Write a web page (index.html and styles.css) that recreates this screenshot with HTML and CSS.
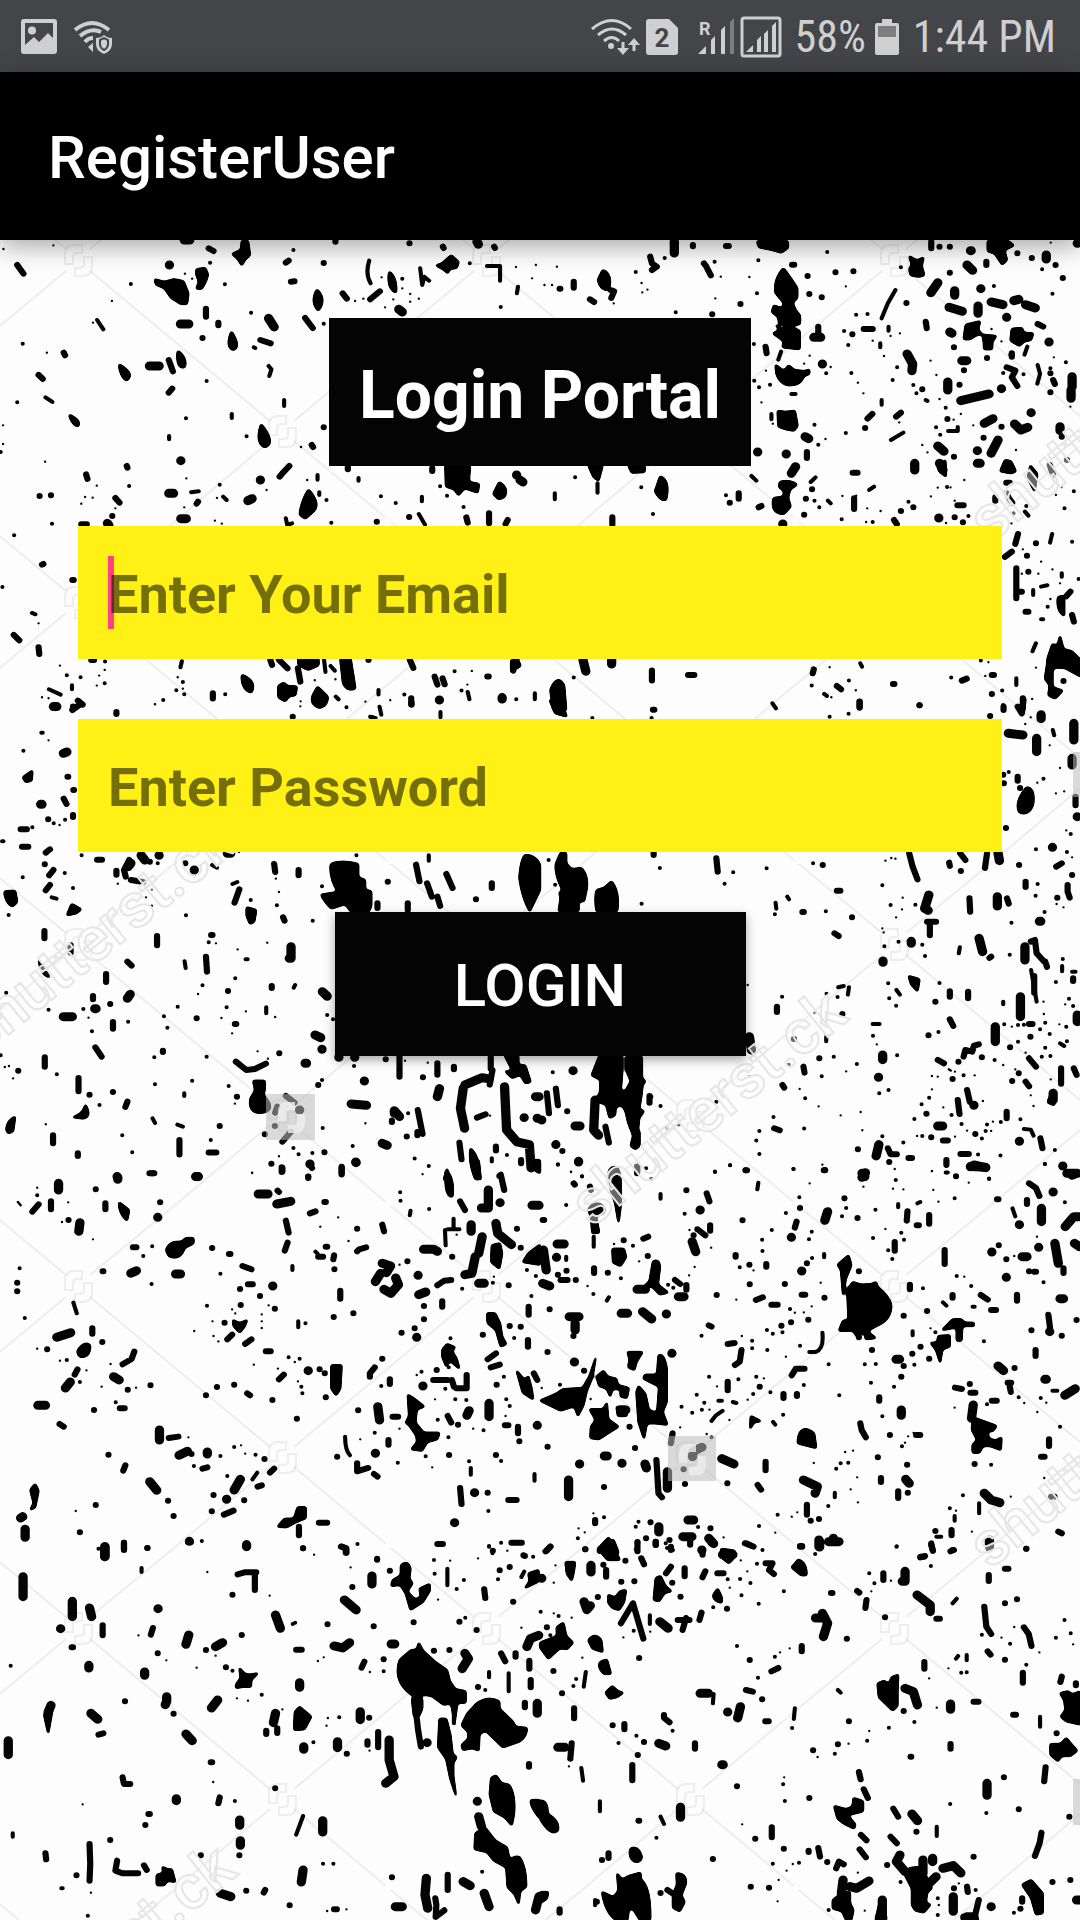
FILE: index.html
```html
<!DOCTYPE html>
<html lang="en">
<head>
<meta charset="utf-8">
<meta name="viewport" content="width=device-width, initial-scale=1">
<title>RegisterUser</title>
<link rel="stylesheet" href="styles.css">
</head>
<body>
<div class="status">
  <div class="status-group notices">
    <svg width="36" height="36" viewBox="0 0 36 36" aria-hidden="true"><path fill-rule="evenodd" d="M3 0h30q3 0 3 3v29q0 3-3 3H3q-3 0-3-3V3q0-3 3-3zM4 4v22l9-8 5 5 9-9 5 5V4z"/><circle cx="11" cy="11.500" r="4"/></svg>
    <svg width="40" height="36" viewBox="0 0 40 36" aria-hidden="true"><path class="line4" d="M2 11Q19-3 36 11M7 17Q18 8 28 13M12 23Q15 19 20 19"/><path d="M15 28l5-4v9zM23 19q5 0 8-3 3 3 8 3v6q0 7-8 10-8-3-8-10z"/><path class="shield" d="M27 21l4-2 4 2v4q0 4-4 6-4-2-4-6z"/></svg>
  </div>
  <div class="status-group">
    <svg width="49" height="40" viewBox="0 0 49 40" aria-hidden="true"><path class="line3" d="M1 12Q21-5 40 12M7 18Q21 6 35 18M13 24Q21 17 28 24"/><circle cx="20" cy="29" r="3"/><path class="line3" d="M32 25v10M43 34V25"/><path d="M26 31h12l-6 7zM37 28h12l-6-7z"/></svg>
    <svg class="sim" width="32" height="36" viewBox="0 0 32 36" aria-hidden="true"><path d="M3 0h20l9 9v24q0 3-3 3H3q-3 0-3-3V3q0-3 3-3z"/><text x="16" y="28">2</text></svg>
    <svg class="bars" width="36" height="40" viewBox="0 0 36 40" aria-hidden="true"><text x="1" y="18">R</text><path d="M0 37l8-8v8zM13 37V23l4-4v18zM23 37V13l4-4v28z"/><path class="dim" d="M32 37V5l4-4v36z"/></svg>
    <svg width="42" height="42" viewBox="0 0 42 42" aria-hidden="true"><rect class="line3" x="2" y="2" width="38" height="38" rx="2"/><path d="M6 36l7-7v7zM17 36V24l4-4v16zM24 36V18l4-4v22zM32 36V10l4-4v30z"/></svg>
    <span class="battery-text">58%</span>
    <svg width="24" height="36" viewBox="0 0 24 36" aria-hidden="true"><path d="M7 0h10v4h5q2 0 2 2v28q0 2-2 2H2q-2 0-2-2V6q0-2 2-2h5z"/><path class="empty" d="M3 7h18v11H3z"/></svg>
    <span class="clock">1:44 PM</span>
  </div>
</div>
<header class="appbar"><h1>RegisterUser</h1></header>
<main class="screen">
<svg class="splatter" viewBox="0 240 1080 1680" preserveAspectRatio="xMidYMin slice" aria-hidden="true">
<defs>
<filter id="ink" x="-10%" y="-10%" width="120%" height="120%">
<feGaussianBlur stdDeviation="5"/>
<feComponentTransfer><feFuncA type="linear" slope="5" intercept="-1.700"/></feComponentTransfer>
</filter>
<pattern id="grid" x="-22" y="180" width="408" height="342" patternUnits="userSpaceOnUse">
<path d="M112 91L292 241M316 261L408 338M88 91L0 164M0 -4L88 69M112 69L196 0M196 342L292 261M316 241L408 164"/>
<g id="mark"><path d="M87 84V75q0-10 9-10h8v8h-5q-4 0-4 4v7zM114 77v9q0 10-9 10h-8v-8h5q4 0 4-4v-7z"/></g>
<use href="#mark" x="204" y="171"/>
</pattern>
</defs>
<!-- upper left -->
<g transform="translate(0 230) scale(.3444 .3333)">
<path class="a" d="M10 57h0M155 46h0M325 213h0M270 278h0M136 368h0M9 586h0M9 642h0M131 695h0M281 767h0M247 801h0M269 803h0M236 821h0M335 835h0M541 745h0M535 832h0M630 804h0M624 872h0M644 881h0M774 780h0M892 750h0M874 651h0M537 131h0M558 146h0M1031 213h0M1055 206h0M1142 208h0M1191 192h0M1191 215h0M1216 206h0M1118 232h0M1108 142h0M1168 175h0M1545 145h0M1498 111h0M1556 105h0M112 1180h0M174 1307h0M304 1320h0M288 1337h0M281 1367h0M516 1342h0M531 1376h0M450 1423h0M914 1351h0M974 1348h0M1061 1415h0M1133 1411h0M1357 1364h0M1370 1323h0M141 1405h0M122 1402h0"/>
<path class="b" d="M380 162h0M610 98h0M852 60h0M653 163h0M729 248h0M66 341h0M50 517h0M2 666h0M600 453h0M540 565h0M716 619h0M673 552v12M491 618v10M638 764h0M375 768h0M151 881h0M41 916h0M7 1071h0M282 270l18 28M132 502l20 14M648 800l10 10M948 810h0M962 878h0M922 735v14M927 787v8M1041 744v8M1106 799h0M1149 819h0M1278 769h0M1346 831h0M1298 797h0M1225 800v14M1216 852l18 32M1364 100h0M1168 146h0M1454 231h0M1504 170l-3 20M1072 92q-12 40 4 68M1414 108h38v44M555 787l22-3M194 1336h0M234 1342h0M209 1366v12M304 1360h0M531 1356h0M512 1381h0M535 1393h0M474 1410h0M654 1393h0M305 1295h0M93 1149l10 4M528 1294l-4 18M941 1290l4 36M960 1308l12 14M975 1400l8 8M1099 1380v14M1174 1394h0M1320 1324h0M1340 1382h0M1358 1386l5 22M1499 1408h0M1553 1390v18M940 281h0M737 352l4 2M825 510v18M1220 115l6 50 6-25 14 12M830 865l4 20 14-5M142 1378l34 16M780 408l8 10-6 20"/>
<path class="c" d="M940 99h0M1189 40h0M1286 50l2 4M1435 50l2 4M50 105l18 26M185 368l4 8M112 435l12 12M588 324h0M634 278v8M598 236v24M606 55l14 8M830 98l8-6M845 155l10-1M886 264l22 30M995 190l12 16M1075 208l28-24M115 798h0M148 796h0M368 708l2 5M250 733l4 14M335 804l12 14M575 815l-4 6M326 858h0M236 883h16M840 708l-20 22-8 10M905 645l4 6M940 592h0M1094 875h0M1188 861h0M1354 862l4 16M1420 850v30M1474 870l-6 12M1255 715v8M1010 712v6M490 390l12 34M756 330l30 10M122 1004l4-2M210 1050h4M40 1215l16 16M112 1252l2 20M618 1390v16M226 1412l14 12M212 1430h0M865 1315l7 40M785 1290l5 15M810 1290l25 25M1070 1290h0M1262 1340l8 24M1285 1345l6 18M1415 1340h4M1500 1288l-10 34M1194 1405v18M1190 1290l10 24M974 30v5M490 488l10-12M265 1290h8"/>
<path class="d" d="M434 408h28M525 692h0M535 30h16M492 105h0M756 750h0M720 812l12-6M780 265l16 26M524 282h24M490 790h14M525 866h16M1276 1410h0M1458 1403v4M155 1430h10M1385 35l4 8M312 880l4 6M1510 750l8 6M1500 735h0M1158 238l10 8"/>
<path class="f" d="M449 148l28 8 28-8 28 6 14 36-4 32h-18l-28-18-20-30-24-10zM570 118l26-4 8 20-6 20-12 22h-16l8-20-8-22zM702 32h18l6 44-14 12-10 18-12-20-16-14 26-12zM1266 106l18-6 26-24 22 20-6 18-20 2-6 14-10-10zM345 402q50 30 22 50-18-10-22-50M200 553q40 20 26 37-18-6-26-37M672 304q30 50 4 56-22-10-4-56M516 362q30 24 20 50-26 6-20-50M920 178q30 30 4 64-24-24-4-64M1130 124q24 20 20 64-28-10-20-64M758 582q46 60 10 70-28-14-10-70M896 778q40 48 10 70l-20 18-16-12q4-40 26-76M1293 706h72l-4 50 30 6-4 26-22-8-16-6-18 22-12-18-24-8zM1450 756q30 20 14 46l-16 6-16-16zM702 1334q46 20 28 54-30-8-28-54M808 1368l16-10 10 10 28 2-4 26-18 2-12 16-20-12zM922 1370l30 30q0 30-24 34-30-10-20-38zM988 1286h30l14 90q-24 10-36-16zM865 1286h60v20l-30 14-28-14zM1484 1290h20l8 18-28 16z"/>
</g>
<!-- upper right -->
<g transform="translate(540 230) scale(.3444 .3333)">
<path class="a" d="M13 165h0M35 165h0M295 159h0M297 187h0M312 179h0M214 220h0M509 205h0M49 110h0M525 140h0M608 141h0M888 169h0M966 332h0M1018 318h0M1045 310h0M999 378h0M1134 392h0M1151 435h0M923 458h0M939 490h0M844 411h0M643 517h0M783 377h0M656 422h0M829 627h0M1110 645h0M1125 667h0M1160 507h0M1222 552h0M1201 569h0M1258 586h0M1043 577h0M1311 297h0M1340 334h0M1483 38h0M1363 374h0M1492 382h0M1540 530h0M1382 660h0M1514 771h0M1498 795h0M1232 750h0M1192 772h0M1155 773h0M1135 799h0M1204 812h0M878 798h0M918 797h0M950 835h0M989 843h0M947 876h0M1179 879h0M1369 880h0M1402 958h0M1455 995h0M1488 1018h0M1447 1031h0M1399 1031h0M1482 1107h0M1510 1060h0M917 1381h0M846 1402h0M1429 1407h0M1293 1338h0M1440 1313h0M1302 1297h0M841 1312h0M676 581h0M767 401h0"/>
<path class="b" d="M278 126h0M362 84h0M394 247h0M507 95h0M634 91h0M834 66h0M1048 112h0M1488 191h0M918 254h0M951 252h0M883 303h0M895 345h0M1037 412h0M1024 450h0M1093 490h0M1084 465h0M831 430h0M622 452h0M636 472h0M668 464h0M621 342h0M630 190h0M904 429h0M992 510v14M888 609h0M797 584h0M808 644h0M730 492h12M672 552v16M1012 290v12M988 340v12M1032 180l-22 40-18 45M1415 350l-8 24M1445 405l7 26-8 30M1527 397h0M1345 429h0M1404 433h0M1178 533h0M1055 608l-36 22M1150 592h0M1162 614h0M1185 603h28v-12M1318 168h0M1458 118h0M1120 510l5 3M102 742h0M294 772h0M328 852h0M167 760v28M43 790v18M540 796h0M614 738l14 14M800 742l-14 14M970 770l-14 10M836 812l8 8M797 812h0M811 832h0M876 868h0M966 876h0M1182 771h0M1070 815h0M1244 858h0M1375 850h0M1408 845l10 12M1523 835h0M1550 784h0M1487 912l-6 26M1545 935h0M1455 1070l18-4M1474 1130h0M1455 1168h6M1432 1080v15M1440 1240l-10 24M930 1300l5 10M897 1352h0M789 1367h0M825 1392l8 6M675 1420l10 15M1194 1343h0M1342 1382h0M1383 1345v20M1280 1292h0M98 1343h0M325 1438h0M1345 1425v14M1515 1030v10M1564 1047h0M1482 415h0M1412 828h0M700 365l-8 24"/>
<path class="c" d="M444 45v4M540 48h8M57 176h2M98 155v18M320 80l5 20 14 10-14 10M476 100l6 8 14 28M205 180l10 4-8 20M582 222h0M500 253h0M777 138h0M782 192h0M818 202h0M858 127h0M910 124h0M1064 219h0M1136 35v20M1160 50h0M1190 50h0M1386 70h0M1428 84h0M1497 105h0M1518 144h0M1296 95v10M1190 128h0M940 297h26M907 313h0M1120 275l3 20M808 290v25M1202 352h0M1231 421h0M1298 384h0M1110 478h0M1218 464h0M1482 430h0M1482 487h0M1515 620h0M1183 567h0M1340 590h0M1288 623h0M1202 680h0M775 666v18M908 728h14M965 552l-14 14M944 594h0M1048 548l-14 12M790 778h0M772 806h0M551 818h0M577 790v16M767 854h0M635 832l8-4M912 805v32M1084 832h0M1048 843h0M1212 826h18M1204 862h0M1228 877h0M1354 758h10M1355 790l6 14 10 14M1322 802v10M1028 870l8 12M1440 940h0M1388 912l-8 30M1414 977h0M1370 965l-20 16M1418 1025h0M1383 1015v90M1385 1085h14M1540 1085l-12 14M1410 1145h8M1545 1155l5 20M795 1318l-3 12M325 1322v30M430 1335h18M1025 1362h4M1225 1352l14-6M1312 1335h6M1312 1392h0M928 1415v16M1102 1426h0M1520 1353h0M1402 1405v30M862 1368l12 10M1370 370v10M1355 412l25 10-10 20 16 26M1445 282l16 8M1490 450l5 12M1530 690h0M1480 705l10 30M210 862v22M655 350l3 20M145 208l12 8M732 104h6"/>
<path class="d" d="M390 35v34M700 55h0M1155 158l-20 30M1204 182v14M1250 62h2M1240 105l16 16M1280 176h0M1470 75v12M1272 228v22M1188 232l38 12M1310 216l34 8M1376 212l14-4M1410 224l28 10M1355 262h0M1190 306l6 4M1478 336h0M1066 372l16 30-2 20M1184 456v24M1340 476h0M1426 548h0M1225 392h14M795 322h20M820 402h0M632 666h0M715 672h0M770 620l10 6M1155 648l18 16M1270 662h0M1510 590v12M1378 582l18 18 20-8M1290 580l25-14M1088 700v20M1160 700l10 20M1330 630l-20 40M1222 512l82-20M742 710l-12 20M1270 700h8M1158 864h0M1545 440v30M1542 480v25M705 882h0M1565 1295v8M1560 40h0M208 1288v14M125 1290l8 34"/>
<path class="f" d="M630 34h90v20l-20 14-24-8-40-8zM707 114q22 30 40 60v30l-14 14 10 24 12 14v26l-10 2-50-2-4-22-18-14 6-20 24 10 6-16-26-32q-4-42 24-74M684 286l24 14 6-14 40 16v56l-50-6 4-18-32-24 22-10zM684 404l24 20 14-18 16 14 30 4 14-6v14l-16 6q-8 30-46 28-26-6-34-36zM690 542l22 4 28-4 8 46-10 14-24-4-22-8zM182 120q30 10 18 60-24 4-32-30zM696 756q30-8 50 8l-20 14-6 26 8 26-20 22q-40 0-30-48l30-4v-18l-14-10zM1300 32h58l18 14-28 14 8 30-14 14-22-34-20-6zM1072 78l22 14 20-10-6 26 8 28-16 4-24-4-4-20 8-10zM1236 284l42-10-6 24 10 14-16 4-18 12h-18zM1285 314l40 4-12 18v22h-24v-18zM1370 296l30-2 4 14 28 2-6 20-20 4-14 14-26-16zM346 738q34 10 20 72-18 4-34-30M140 706h42l-12 46-14-10zM256 706h48v20l-38 2zM1350 690l18 4 14 30-14 6-32-6zM1424 706l20 26-8 52-20-40zM1474 1284l14-42 14 8 8-32 10 40 24 6 26 26v50l-46-26-30-2-6 10v50l30 10-22 24-20-10 4-30-14-20 6-40zM1504 1100l18-2v60q-24-16-18-58M30 1380q20-52 40-14l6 74H38zM1155 710l22-20 2 50-20-16z"/>
</g>
<!-- middle left -->
<g transform="translate(0 700) scale(.3444 .3333)">
<path class="a" d="M450 13h0M141 121h0M173 375h0M441 569h0M424 592h0M441 617h0M342 551h0M801 536h0M810 576h0M690 748h0M776 728h0M627 730h0M575 882h0M674 1000h0M714 934h0M799 951h0M643 954h0M257 953h0M748 1054h0M778 1076h0M26 1098h0M14 1101h0M38 1135h0M682 1211h0M133 1273h0M1061 1270h0M1423 1247h0M1176 1082h0M1242 1088h0M810 1369h0M872 19h0M1227 1423h0M732 1418h0M694 456h0M873 4h0"/>
<path class="b" d="M120 98h4M68 152h0M156 370h0M189 359h0M94 382h0M6 424h4M66 532h0M188 519h0M25 645h0M237 466h0M212 564h0M540 646h0M908 662h0M804 616h0M728 600h0M606 727h0M588 856h0M683 835h0M713 778h6M536 784l3 20M18 878h0M141 929h0M242 927h0M267 994h0M372 965h0M476 949h0M516 920h0M486 983h0M658 922h0M857 855l-4 8M773 922v18M600 1070h0M448 1072h0M2 1066h0M165 1123h0M450 1153h0M535 1180v8M558 1142h0M664 1158h0M289 1215h0M384 1357h0M355 1306h0M443 1255l7 14M515 1274l16 6M612 1320h0M937 1284h0M1024 1338h0M907 1359h0M867 1363h0M788 1390h0M852 1344h0M1028 1098h0M935 1140h0M950 945h0M967 958h0M1185 1240h0M1204 1376h0M1245 1398h0M616 495l14 8M458 490h0M1245 466v16M935 559h0M1472 1365h0M1428 1375v10M1102 20l5 24M1279 36v16M1006 22h0M1035 466h0M150 592l14 4M675 552l14-6"/>
<path class="c" d="M338 36v6M210 30l24-18M198 230h-2M213 270h2M185 296l8 16M140 358h0M212 345v6M60 388h18M64 440h18M145 448l-12 10M130 493h0M282 479h14M338 512v12M155 510l-12 16M145 555l-12 16M435 485h0M538 490h0M365 530l-5-20 15-30M380 540l36 6M695 568l-14 40M796 492l3 24M867 510v16M1126 545h0M1382 598h0M1096 610v14M1184 610v20M1208 494l10 50M1240 550l14 40M1270 590l8 28M1296 522l18 42M1428 550v14M822 652l4 10M129 693v22M456 708v28M617 705h-4M205 736v22M370 785l12 12M308 822v24M598 770l3 45M270 888v10M320 912h0M571 955h0M686 972h-4M662 873h0M789 858v6M328 966v20M130 1072v28M277 1042l18 28M473 1052v4M53 1112h0M228 1134v40M260 1184h0M328 1176h0M370 1205l-6 16M154 1306v24M226 1360v8M521 1320v44M638 1278h0M606 1358h22M811 1060h0M688 1190h0M685 1085l30 25 25-3 32-16M924 1155h0M942 1357h0M769 1303h0M798 1278h0M805 1220l-6 18M830 1188l25 20M845 1295l-25 30M1120 1078h0M1228 1132h0M1270 1090v34M1318 1100v8M1425 1072v34M1181 1310h0M1212 1296v10M1138 1262v4M1213 1230l14 72M1334 1328l6 50M1440 1340v12M1513 1380v10M1450 1428h0M992 1404v20M820 1404v10M1385 1253l25-10M1160 1070v60M898 1390l8 14M850 50h0M1195 8v6M440 1420h4M895 1430h0M1430 1110l-8 44"/>
<path class="d" d="M122 313h-4M160 20h0M184 160l10-4M564 510h0M275 926h4M370 895l8-12M184 950h26M890 1090h-4M935 1048h0M915 1005l16 8M936 875l14 14M1058 1143h0M1020 1212l44 4M870 1230h0M1110 1330l14 6M1033 1386h0M1270 1190l6-24M1145 1240v-8l15 18M845 740v35h-5M380 490l-8 10M462 466h0M410 466l10 14M1522 1253h0M1555 1190h10M1560 1255h0M660 460h10M984 1072h0M1030 1072h0M1345 1165l-8 60 12 60M1350 1155l50-22 20 4M1465 1160l6 130 30 36 36 8 5 70M568 1430h8M340 1430h0"/>
<path class="f" d="M960 492q30-14 80 0v40l20 8 0 30 18 4v44l-8 18h-50l-18-24-40 14q-20-20-30-42l50-8q-26-40-22-84M1525 464q30 0 43 30v76l-30 64q-22-40-30-100 4-56 17-70M735 1142h34v24l-4 20q40 44-2 52-44 6-36-42l14-24zM716 622l28 8-6 36-12 6-10-24zM194 646l14-34 28 16-14 12zM66 232l28-20-2 30-18 4zM12 574l32-2 6 34-14 14q-20-10-24-46M212 1252q30-10 36-38 20 36-6 42zM18 1290q2-30 26-40l-6 44-14 6zM112 778l32 54q-26-6-32-54M1072 46l26 8h-26zM910 0h40l-18 22zM1465 1066h40v30l20 0 16 50-16 4-14-26-24 10-20-20 22 0zM1366 1344q30 30 28 94h-14q-20-50-14-94M1288 1440l10-34 10 34z"/>
</g>
<!-- middle right -->
<g transform="translate(540 700) scale(.3444 .3333)">
<path class="a" d="M676 12h0M685 26h0M1480 136h0M1425 52h0M1409 72h0M1510 204h0M1498 280h0M1522 274h0M1444 248h0M1528 391h0M1545 472h0M1003 482h0M1020 474h0M1032 476h0M1053 593h0M1051 628h0M1034 652h0M994 685h0M998 697h0M603 855h0M797 939h0M978 1033h0M873 1246h0M931 1236h0M936 1291h0M754 1167h0M809 1219h0M608 1129h0M889 1114h0M1205 1115h0M1262 1126h0M1138 1168h0M1171 1222h0M1286 1203h0M1425 1186h0M1433 1218h0M1310 1293h0M1508 973h0M1462 905h0M1525 913h0M1463 942h0M1370 980h0M1155 1130h0M1138 1128h0M1095 1308h0M1138 1413h0M1205 1310h0M1240 1292h0M1315 1265h0M1410 1058h0M1345 1095h0M1380 1108h0M1483 1138h0M90 1415h0M820 1394h0M1500 612h0M1520 622h0M1187 1108l6 4"/>
<path class="b" d="M152 54h0M324 54h0M348 504h0M561 517h0M536 551h0M658 505h0M295 611h0M25 480h0M44 554h0M793 490h0M994 556h0M682 643h0M830 634h0M684 608l2 18M718 590l5 8M1018 615h0M1090 614h0M1369 668h0M1000 739h0M1041 725h0M1110 734h0M1118 768h0M1011 850h0M1014 895h0M1034 917h0M1035 870l10 14M832 881h0M864 891h0M703 890h0M897 862l-3 22M866 862l16-4M966 972h20M967 1007h0M1160 849h0M1157 996h0M1219 742l-3 18M1364 764h0M1518 777h0M1516 798v16M1498 846h0M1545 815h10M1536 896h0M1548 918h0M1345 905v8M1445 552h0M1439 587h0M1465 636h0M1440 448h0M1530 456h0M1541 402h0M1361 216h0M1462 236h0M1489 90l4 16M896 41h0M841 50h0M722 1094h0M853 1070h0M1037 1066h0M920 1092h0M831 1010v14M770 1195h0M767 1286h0M678 1251h0M818 1129h0M350 1218h0M368 1284h0M403 1274h0M37 1117h0M512 1205h0M508 1415h0M552 1396h0M637 1362h0M628 1322h0M637 1293h0M1012 1170h0M985 1180h0M1130 1193h0M1108 1213h0M994 1309h0M1055 1328h0M1110 1308h0M1087 1257h0M1195 1245h0M1224 1272h0M1338 1266h0M1298 1274h0M1294 1293h0M1283 1316h0M1395 1258h0M1272 1364h0M1337 1367h0M1495 1350h0M1466 1392h0M1405 1287l20 2 8 18M1230 1126h0M1320 1080h0M1388 1025h0M1405 974h0M1388 975h0M1348 973h0M1452 988h0M1467 968h0M1480 1002h0M1467 1043h0M1482 1068h0M1457 1070h0M1528 980h0M1530 1024h0M1510 1030l12 8M736 1407h0M1180 1378v20M1304 1436h0M1208 1429h0M1178 1418h6M1426 810l16 95M308 1405h0M122 1430h0M52 1393h0"/>
<path class="c" d="M328 29h4M928 5v18M1102 16h0M821 495h0M862 572h10M762 636h4M906 652h0M855 700l12 8M878 942h0M737 1017h0M811 1075h0M765 1100l3 18M704 1155l5 8M688 920v16M680 1285l16 6M597 1411h0M828 1411h-4M512 475l4 40M330 460v5M1072 460l10 40 14 38M1188 488l2 10M1220 460l15 20M1222 513h0M1298 460l-6 44M1391 495h0M1410 545v16M1515 490l-16 10M1532 555v20l6 18M1545 525h0M1502 593h0M1247 595l2 40M1356 595l5 16M1124 665h26M1132 670v36M1310 770l-5 4M1190 874v16M1243 875v20M1148 905h0M1190 958l10 20M1128 1006h0M1387 20l12 20 5-40M1307 48h0M1346 20v10M1387 230v12M1394 264h0M1353 384h0M1345 224h0M1347 250h0M1555 290v26M1467 785l5 16M1425 725l12-5 5 40 22 25M1548 835v8M1155 1080l18 10M1215 1085h0M1198 1137h0M1283 1072h0M1230 1070l5-20 20 5 5-18 14-4M1365 1042h0M1390 1120h0M1371 1143h0M1420 1075l20 25M1420 972h10M1424 1010h0M1410 1145l10 14M1513 1105v46M1550 1105l8 20M1355 1235v20M1213 1200l5 42M1240 1170l8 36M1122 1241h0M1136 1312h0M1170 1322h14M1264 1302h0M1245 1362h-24M1070 1374h10M1014 1386h0M1010 1345l8 18h18M1453 1315l6 30M923 1348h0M318 1188v20M320 1190h0M79 1234h0M46 1166l6 50M65 1353h0M282 1400v16M20 1180l6 60M190 1280l10 48M1435 828v50"/>
<path class="d" d="M1455 44v12M1442 115v40M1550 70v50M1360 100l42 5M1545 175v20M1560 350h0M1488 442h0M1330 460l4 22M1129 585l-12 40 10 6M1328 590v28M1450 664h4M996 787v-4M1078 724v6M1275 715l10 40M995 1065v14M983 1132h0M976 1368l8-34M96 1112h0M102 1278h14M112 1386h0M46 1334h0M1155 1278h14M1392 1324h0M1518 1398h0M1545 1426l8-4M1250 1400l44 2M1395 890v60M1322 980v45M1260 1216h0M1490 1180v20M1408 740v40M5 1260h0M608 1010l6 40M160 1200l-4 90 14 16M935 1420l8 10M1560 945v20"/>
<path class="f" d="M28 0h44v36l6 14-34-10zM60 458h16v32l16 18 28-4q20 20 16 60l-8 40-16 0 0 30H54l6-40-4-16 10-6q-24-50-20-80zM164 570l22-6 22-20q24 30 16 90h-60q-6-40 0-64M172 1068h66l0 60-4 46 14 0 16-30-14-34v-40h46v66l10 8-8 10-4 36-6 38 14 6-14 20-4 40-10 22-18-48-8-36-10-16-18 4-2 26-16 8-10-40-36-12 18-22 2-40-26-14zM275 1290l14 4v44l-12 10-14-10zM1412 262q26 0 20 50-10 36-40 26-16-30 20-76M1070 828l32 10-6 36-18-20zM1476 1200l16-34 2 50-20-8zM208 1400l24 40h-32z"/>
</g>
<!-- lower left -->
<g transform="translate(0 1160) scale(.3444 .3333)">
<path class="a" d="M52 126l8 10M108 83h0M198 127h0M180 186h0M270 238h0M732 39h0M982 172h0M1012 243h0M930 200h0M1160 314h0M760 463h0M760 484h0M760 504h0M564 513h0M617 484h0M620 528h0M634 544h0M674 448h0M683 460h0M780 436h0M737 614h0M807 626h0M856 606h0M865 664h0M108 566h0M174 602h0M251 631h0M321 612h0M395 683h0M295 680h0M547 832h0M700 856h0M712 881h0M220 1053h0M912 1184h0M1046 838h0M1160 806h0M1255 922h0M1263 718h0M1374 806h0M1434 350h0M1326 224h0M1210 645h0M1468 768h0"/>
<path class="b" d="M108 106h0M57 325h0M72 474h0M442 259h0M640 341h0M440 372h0M416 288h0M601 437h0M213 428l10 32M194 600h0M232 666h0M336 727h0M680 861h0M742 884h0M640 888h0M563 918h0M660 948h0M586 1143h0M286 1166h0M838 592h0M870 596h0M875 680h0M878 700h0M887 490h0M866 484v18M849 318v12M1162 97h0M1163 122h0M1192 152l-2 14M1246 147h0M1038 1152h0M1107 678h0M1155 908h0M1088 818h0M1236 889h0M1302 832h0M1303 622v0M1293 686h0M1322 718h0M1354 720h0M1271 779h0M1404 811h0M1362 904h0M1367 924v20M1455 903h0M1418 1053h0M1342 386h0M1431 368h0M1308 535h0M1224 635h0M1470 718h0M1480 738h0M1463 650h0M1493 534h0M1530 330h0M1556 348h0M1420 1160h0M1455 1148h0M1430 1170v10M1292 210l2 46M1300 208h34M1317 176v30M1552 942v20M1543 408h0M747 938l-14 20M1002 830q0 40 14 56M916 275l6 6"/>
<path class="c" d="M278 88h0M306 130v18M465 127h0M434 40h14M148 124v24M94 155l18-22M199 180h0M50 368h0M50 394h0M298 334h2M616 264h0M665 282h4M386 262h10M818 22v14M788 11h0M895 50v4M992 20v20M942 126h4M900 160l16-6M806 92l4 4M830 182l8 36M835 248l-8 24M970 286l-2 12M971 328h0M946 260h4M924 290h14M1037 206h0M1110 194l5 20M1037 274l6-6 20-6M988 392v24M969 471h0M1026 460h0M704 318l26 10M720 373h14M697 387h0M755 408h0M798 446h0M699 435h0M652 488h0M674 524l-14 14M730 538l-18 14M772 574h14M137 568h0M297 546h0M268 505v16M225 628l-8 16M437 676h0M371 689h0M348 745h14M273 750h0M173 792l12 8M315 884h0M364 916l-6 16M390 575l-8 22-26 16M630 681h0M680 674h0M598 706h0M718 700l8 6M791 720h0M862 776h0M946 712h0M943 640h0M928 628h0M824 644l-14 14M768 897h0M796 926l-12 12M748 980l12-4M709 1021h0M620 1005h0M615 1054h0M650 1064l28-12M488 1022h0M504 1068h0M278 1035h0M232 1117h0M428 1164h0M360 1148v22M546 1146h8M490 834l28-4M556 882h0M602 922l-14 4M926 1088h24M868 1100v26M716 1150v14M880 1165h0M1110 596h0M1088 622l-14 18v10M1132 658v14M1040 751h0M1140 770h16M1128 840v14M979 890h0M1086 942l10 8M1037 910v24l32-10M1166 518h0M1204 505h0M1231 478h0M1231 438h0M1284 424v16M1183 304h0M1270 376l20-14 20-2M1313 290h0M1304 885h0M1440 885h0M1330 794h0M1402 524h0M1480 498h0M1512 500h0M1535 440v24M1533 540v20M1440 580l-24 18M1425 622l26-8M1442 674h0M1504 800v20M1508 844h0M1466 796h10M1336 984l4 48M1416 998h0M1476 1020h24M1512 263h0M1501 206h0M1477 376h0M1454 44l10 46M1336 124l14 26M1258 660h42M1312 660l6 20M1355 645v40h-30M1300 768l10 20M1268 630h0M1270 1152h16M1485 1148h30M1520 1186h0M1095 1196h0M990 1160l16 6v12M1550 640l10 20"/>
<path class="d" d="M342 52v6M572 50h0M170 70v20M232 188l-3 26M458 172h0M510 342h14M380 340l16-8M792 378h0M1034 8h0M900 12h0M750 102h28M804 132l40-8M165 532l40-14M330 650l16 10M190 684l14-18M110 736h22M463 810v30M520 886l24-12M602 876v6M680 990l18-32M435 965l20 26M658 1018h0M66 1070l-6 4M73 1108v24M305 1160v30M1090 880h0M1214 346h0M1216 404l20-8M1210 532h0M1228 678h0M1356 766l6-14M1320 1088h0M1378 998h0M1368 194v20M1452 128h0M1398 144h20M1418 90v50M1420 730v40M1097 740l5 40M1230 268h30l10 6M1545 136h20M1560 796h0M1090 365l15-25M1110 310l24 8-12 20M1115 388l20 12 22-26-8-20M895 632h0M1400 230l-10 50M1380 290l-10 50-20 4M1390 370h16M1440 190l5 30 40 34"/>
<path class="f" d="M482 270q10-30 44-24l14-12h22v16l-26 14q-12 40-46 24zM226 570q20-30 36-14 0 40-30 34-10-10-6-20M345 126l30 24-6 32q-24-20-24-56M962 616h30l-4 70-12 20-14-20zM676 480l20 10 22-10-8 20-14 18-18-20zM806 1100l20-24 28 0 10-34h24v32l-28 12-28 16zM1184 704l16 10 32 26-22 8-4 40 24 30 46 0-6 20-30 8-14 26-32-4 18-22-4-20-20-30-10-8 10-20zM1284 570l14-18 24 10-10 10 14 24 8 30-16-14-12-12-10 20-12-30zM1294 30q26 20 20 80-24 4-20-80M1366 0h24l6 60-14-14zM1414 460h24l14 30 6 40 12 22-16 8-14-50-24-20zM1428 256l24-6 6 30-8 46-24-20zM1500 632l24 30 10-14 10 40 4 30-30-20zM88 1050l10-20-10-40 14-18 10 20-10 50zM1534 280l34-26v60l-50-8zM1540 0h28v40l-14-8z"/>
</g>
<!-- lower right -->
<g transform="translate(540 1160) scale(.3444 .3333)">
<path class="a" d="M90 36h0M308 24h0M783 70h0M939 80h0M1025 86h0M1055 88h0M1142 90h0M1157 125h0M1138 34h0M1181 40h0M1245 68h0M434 210h0M497 263h0M449 321h0M433 346h0M288 304h0M215 252h0M138 378h0M570 419h0M620 331h0M740 458h0M789 439h0M766 457h0M586 528h0M587 565h0M514 679h0M603 719h0M650 655h0M407 802h0M550 780h0M484 822h0M492 749h0M714 590h0M1003 207h0M1232 350h0M1134 505h0M1377 288h0M1470 728h0M1444 756h0M1406 729h0M1204 743h0M1085 819h0M1069 829h0M909 872h0M886 876h0M921 952h0M923 1027h0M902 988h0M795 909h0M747 1057h0M731 1070h0M683 1118h0M155 1060h0M130 1117h0M112 1105h0M1464 954h0M1367 1010h0M1254 1115h0M1208 1052h0M533 1132h0M368 1164h0M5 684h0M147 717h0M1443 230h0M1030 27h0M815 368h0M1060 848h0"/>
<path class="b" d="M52 14h0M76 135h0M122 49h0M323 56h0M420 161h0M350 102v14M508 36h0M552 16h0M736 27h0M634 68l-3 20M753 112h0M714 159h0M889 144h0M877 169h0M974 149h0M967 234h0M1049 218h0M1057 239h0M1011 271h0M1023 297h0M1033 60h0M1015 6h0M1040 132v10M1096 130l8-4M1204 115h0M1304 57h0M1466 12h0M1372 145l8 24M1524 127h0M645 239h0M673 210h0M646 273h0M781 238h0M789 215h0M790 294h0M825 282v10M580 322h0M270 257h0M235 355h0M155 402h0M200 412l-6 10M76 290v10M372 374h0M387 383h0M469 527h0M616 542h0M616 565h0M660 570h0M659 510h0M676 521h0M704 517h0M726 447h0M755 557h0M576 658h0M628 650h0M619 702h0M669 697h0M455 704h0M477 728h0M442 758h0M411 740h0M470 749h0M491 650h0M58 674h0M518 722h10M560 726l10 3M706 764h0M677 786l6 8M766 675h0M838 613h0M869 706h0M943 613h0M975 612h0M961 668h0M1028 680h0M994 769h0M873 910h0M895 908h0M860 926h0M1051 859h0M1087 614h0M1148 517h0M1082 514v12M1112 385h0M1252 378h0M1210 348h0M1170 427l10 10M1256 440h6M1289 544h0M1462 367h0M1390 712h0M1454 714h0M1298 733h0M1310 914h0M1228 1006h0M1190 1045h0M1275 1030v30M837 1038h0M856 998v14M690 1064h0M636 1098h0M459 1101h0M286 1085h0M278 1100h0M186 1072h0M110 1135h0M365 1150h0M646 1170h0M1035 1160h0M1151 1130h14M1204 1068v14M278 1168h0M156 230v30M1488 692h14M1510 800h0M530 753l-20 14-12 16M820 518q5 50-20 58h-18M498 832h0"/>
<path class="c" d="M98 70l3 4M145 80l3 10M77 332h0M157 325v14M197 338h0M28 448h0M22 576h0M97 528h0M22 860h0M8 180h4M243 241h0M300 236l14-6M313 288h0M282 20v20M425 91h0M597 31h4M827 30h0M588 181h0M484 100l8 24M568 285v5M657 312v8M608 314h0M609 373h0M711 372h0M760 404h10M826 413h0M513 405h0M490 496l8 4M627 420l20-8M672 434h18M729 487h0M701 497h0M779 479h0M884 115h0M922 174h0M926 334h0M775 310h0M755 144h0M745 185l-5 18M1067 154l-2 28M1130 165v26M1094 196h6M1030 246v26M1180 0v14M1208 49h0M1327 118h4M1414 120v12M1420 70l20 14 10 24M1175 270v42M1332 256h0M1354 298h0M1198 405v8M1124 453h0M1056 467h0M1074 374v14M1310 450h14M1385 404v18M1420 334h0M1435 335h5M1520 325v14M1558 480h0M1427 511h0M1515 527h0M1476 464l5 40M1439 570v18M1378 624h0M1105 560h0M1081 581h0M1130 596h0M1056 618h0M1049 650h0M926 532h0M964 570h0M545 552l20-3M585 570l-5 35-14 10M545 665v26M638 680h0M707 702v12M746 702v6M768 626l-25 0-12 20M985 712v10M1016 825h0M1092 825h12M930 790l4 20 12 22M990 954v12M1040 994v20M1068 998h0M1066 914h0M981 892h0M1248 672h0M1205 683l20 4M1250 698h14M1312 722h14M1262 912h0M1455 890h10M1478 838v20M1358 668h10M1364 680l3 16M775 1034v30M786 1082h0M810 1077h0M544 970h0M632 975l10 14M655 905v26M421 972h0M417 928h0M186 981h0M276 864h0M260 800h0M160 1080v10M321 1087h0M308 1135h0M283 1146h0M376 1140h0M336 1145v10M380 1160v10M495 1105h0M1148 1113h0M1195 1110v16M1412 1166h0M1505 1115l10 5M1198 1170h0M1105 1190h10M1136 1155l5 18M755 1160h6M595 1150l20 8M131 1168h0M30 1160l-10 12M385 820l-5 30M460 210l20 16M494 196v16M457 208h0M446 226h0M104 360h0M60 360h20M52 344h0M425 375v14M338 900l6 100 10 12M1484 1010h10M1280 405l20 14M128 632h0M392 360l15 12"/>
<path class="d" d="M112 4h0M100 606h0M48 292h0M50 252h20M465 150h0M935 52l10-14M835 155l-8 26M760 333h0M730 232h0M442 245l10 30M282 388h24M236 460h18M298 455l26 22M367 462h0M402 410h16M85 470h28M102 490v20M383 580h0M305 912l4 12M115 912h0M187 888h8M238 910h0M83 960v50M370 935v50M470 862l-25 12-2 16M528 896l35 16M1049 750v16M1062 958l10 12M765 960l40 20-6 20M810 1140v20M852 1135v6M1530 40h30M1490 96h0M1550 42h0M1392 194h0M1456 145v40M1312 276h0M1400 290h14M1448 262h0M1495 250l10 60M1552 250l14 10M1525 200l25-30 14 0M1354 352h0M1510 416h10M1480 515h0M1466 658h4M1330 618l16 14M1524 706l30-20M1250 20l10-5 34 8M1034 598h10M1305 1140v20M1290 1000l20 20 25 8M430 1080h16M345 1100v16M415 1130h26M490 1135l14 16M470 1170h0M530 1184h30M235 750h14M1258 735l-5 40M10 270l8 60M8 370l20 8"/>
<path class="f" d="M200 30q30-30 34 30v80l-6 48-10-60q-20-50-18-98M140 150q10-24 36-18 20 14 6 30l-20 6 10 50-20 2-4-50zM210 266h34l6 26-16 26-22-10zM328 304q20-10 20 20l-6 50 30 24-24 6-24-26-30 10 24-24zM864 314l32-28 8 30-16 40-8 50-6-76zM892 390l16-24 24 8 32-2 12-6 4 14q36 30 40 56 0 44-40 60l-60 34-10-18-42 0 12-30 16-2zM945 510l30 24-30 4zM1168 510l30-32h26l8 10h28v10h-34l-2 44h-14v-40zM1134 548h20l2-20 34-2v34l-22 8-6 40-12-38zM0 722l46-20 20-14 58-4 20-36 18-56-10 60-16 40-10 44-16 32-10-30-40 14zM164 650l20-18 12 18 26 6 4 20 32 8-6 30-18-4v-22l-24-2-6 24-10-24-22-8zM144 748h40l10-20 4 50 30 22-28 18-30 20-24-4 2-34 14-20zM254 576h44l-18 30-6 24-18-8 4-24zM344 586q16-10 24 40v100l-12 30 14 38-36-4-24 0-8 46-16-50-6-90 6-18 20 24 10 48 24 10 6-80-46-24 4-12 36 0zM750 830q10-40 46-10l6 44-54-14zM612 768l30 16-20 2-12 20zM1256 772l70 26-12 16-16-2 6 24 20 6 16-10-2 38-30-12-22 0-10 20h-20v-24l14-14-16-30zM168 1166l32-34 8 20 24 48h-36zM222 740h30v28h-26z"/>
</g>
<!-- bottom left -->
<g transform="translate(0 1540) scale(.3444 .3333)">
<path class="a" d="M602 96h0M783 167h0M626 347h0M483 361h0M402 286h0M571 383h0M688 475h0M619 726h0M240 793h0M264 1058h0M923 363h0M940 352h0M952 534h0M948 557h0M1074 396h0M1073 632h0M1272 179h0M1018 82h0M1006 1108h0M950 1113h0M1473 32h0M1307 62h0M1514 263h0M720 482h0M820 508h0M1388 55h0"/>
<path class="b" d="M31 377h0M37 880v10M411 84v12M760 464h0M910 607h0M985 532h0M968 971h0M938 971h0M1114 394h0M1326 147h0M1347 120h0M1262 101h0M1260 60h0M1446 118h0M1351 233h0M1409 450h0M1548 50h0M1420 18h0M178 1045h4M255 1127h0M682 783h0M880 828l-20 56M1400 995h0M1420 396v16M1477 400v54M857 248h0M1299 86v50M1318 480v70M850 252h0M675 392h0M1522 95l-8 16"/>
<path class="c" d="M360 8v20M428 24h0M675 164h0M702 285h0M598 330h0M656 382h0M458 340h0M444 264l-6 20M363 484h0M504 521h0M286 584l14-4M612 667h4M638 772l-4 18M435 822h-4M422 855h0M320 900h0M222 1006h0M132 940l2 18M260 912l2 60-2 50M583 946h0M695 946h0M715 1052h0M770 1050l-4 8M841 1096h0M1138 1012h0M970 1108h8M880 25h0M860 329h16M951 253h0M1085 259h0M1023 141h0M1201 247h0M1260 332h0M1305 330h0M1334 245h0M1384 270h0M1388 441h0M1114 358h0M1058 365l-8 18M1095 59h0M1132 92h0M1406 148l3 26M1490 185h0M1451 91h0M1480 81h0M1431 32h0M1524 48h0M1497 340v10M1455 340l12 24M1537 362v24M1541 420v22M1524 488v14M1072 533h0M1067 604v10M1098 576v46M1007 641h0M773 572v10M208 322h4M356 712l4 20h18M298 256v30M340 962l-5 30 20 8 46 0M418 976l8 14M799 745h0M994 20l10 4v14M690 103l20-6h34M740 100v50M805 565v14M1536 672v8M1264 1075l3 20-2 36 25-20M1300 1004v46M1204 480l10 90 8 50"/>
<path class="d" d="M67 110v60M210 184v46M176 266h0M260 204l6 26M258 376v8M420 396v10M459 206h0M548 285l-8 28M484 470v14l-4 10M632 480l-18 24M540 582l18 20M264 520l20 18M148 496l-8 20M24 602v42M304 20v30M550 4h0M716 14v6M626 320l20-12M512 776v6M696 840v16M698 902v14M937 842v34M800 225l14 40M870 428v14M980 605v18M882 620v8M1046 515v24M800 520l-6 28M880 990l-5 36M1080 108v24M1136 312h10M970 318l25 6 20-16M1386 784h0M1390 830l8 30M1238 1015l-4 50 8 40M1406 1060l14 40M1345 1025l20 12M1148 1100h20M1560 490v30M1555 1110l10-40M1350 340l10 16-18 30M640 1060l30 10M1130 600v60l14 50-24 20M1215 470v0M1240 608h0M1530 320l10-24 24-10M1000 180l34 30"/>
<path class="f" d="M140 500l12 10-12 70-12-56zM1160 360l34-30 16 0 6-22 12 24 36 34 34 24 8 34 16 24 30 6v34l-24 0-8 60-10-58-22 4-34-26-20-4-34 4q-60-40-40-108M1276 536h20l12 50 6 56 12 10-10 16 0 40 8 60-16-50-12-60-24-36zM1384 490q34-24 66-6v22l40 40 6 14 34 4q0 24-20 40l-50 18-50-50-18 10-2 50-18-8-28 6-4-14 20-20v-20l-20-20 16-34zM1426 714l14-8 16 24 22 4q20 30 14 90l-6 32-20-24-32-18-12-50zM1380 880l28-18 30 40 34 20 8 40 14-12 14 0q20 30 20 90l-18 14-4 38-12-30-20-20-4-60-36-20-20-26-36-8zM1140 120l24-14v-30q20-20 28 10l-4 30 10 14-16 24 24 26 16-10-4-24 30-14v20l-20 34-36 24-14-50-16-26-26 4zM685 434l14-20-4-30 16 18 14 2 24-4-20 20 0 20-24 0-20 4zM870 500l34 30-20 38-30 2 2-54zM455 1004l20-4-4-20 14 8 14 0 10 38-24-4-8 14h-22zM1534 100l30-10v34l-40 20 14-20zM1196 476h30v30l-10 24h-14zM1540 780h28v56q-26-30-28-56"/>
</g>
<!-- bottom right -->
<g transform="translate(540 1540) scale(.3444 .3333)">
<path class="a" d="M45 76h0M92 233h0M40 220h0M242 292h0M123 353h0M84 679h0M551 143h0M602 94h0M583 61h0M646 31h0M725 325h0M697 337h0M709 712h0M587 853h0M806 651h0M896 611h0M956 573h0M1152 503h0M1130 415h0M1186 385h0M962 154h0M1340 293h0M1377 261h0M1450 337h0M1019 122h0M734 972h0M716 992h0M693 1020h0M690 1084h0M923 998h0M943 1112h0M1216 1030h0M1158 1095h0M1548 313h0M320 275h0M40 128h0"/>
<path class="b" d="M54 228h0M2 215h0M30 286h0M272 272h0M105 417h0M97 438h0M280 587h0M228 609h0M385 572h0M338 893h0M386 30h0M369 24h0M545 118h0M611 129h0M581 117h0M635 191h0M630 71h0M585 166h0M708 154h0M503 202h0M572 318h0M682 350h0M633 413h0M706 733h0M711 783h0M732 564h0M950 602h0M856 641h0M1087 546h0M1013 563h0M1191 792h0M1296 819h0M1036 19h0M956 100h0M971 130h0M1135 78h0M1210 176l-12 14M1239 345v16M1214 348l-6 8M1223 398h0M1239 397h0M1283 284h0M1365 311h0M1498 293h0M1541 280h0M1523 240h0M1412 374h0M676 971h0M752 968h0M838 1110h0M1047 1026h0M1265 1050h0M1155 1075h0M1155 1125h0M1376 1118h0M799 42h0M865 450l8 8M740 505l-3 32M504 462l-2 28M133 396l-6 44M319 226v26M174 784v30M350 830l10 22M120 684l5 38M1152 860v28M1452 530v30M160 1080v16"/>
<path class="c" d="M132 28h0M248 62h0M283 10v24M168 171h0M236 125h0M184 74h0M274 124h0M192 90v20M380 80l-14 20M384 128h0M408 170h0M420 85v24M480 94l-8 18M515 100h18M336 5v10M436 0v14M472 28v16M543 206h0M469 218l-6 22M294 55l8 18M30 20l-14 14M20 262h0M288 354h0M39 393h0M64 460h0M99 505v30M211 556h0M245 552v16M302 606h0M284 645h0M360 525v8l16 14M92 610l-4 46M268 675v46M450 610v16M572 739h0M286 842h2M199 940v14M57 1108v10M350 1059h0M502 957h0M609 360h0M672 394l20-10M598 450l20 5M645 478h0M654 544h10M760 318v16M845 159h4M921 153l6 5M891 296h0M948 180l-3 24M997 100v20M1104 52l14-4M1136 10l4 20M1192 34l10-4M1002 232h0M1151 236h10M1350 190h0M1385 178h0M1303 105v18M1350 86h10M1290 200l6 60 14 22M1405 262l14 20 8 36M1300 334l8 10M1350 359h0M1402 398v30M1116 366v20M1056 513h0M1192 612v14M1259 485h14M1374 524h8M1076 650h2M865 613h0M897 544h0M793 631h0M782 774h0M673 862v30M625 896h0M708 926h0M780 932v4M808 924l5 26M834 966h0M612 1040h0M665 1043h0M1026 806l14 24M926 696l5 22M940 748l12 26M932 885l16 16M1018 890l18 20M928 928l18 24M1093 875h0M1347 712h0M1390 808h0M1259 950h0M1468 682l-4 42M1456 878l-5 30-14 40M1500 580h0M1515 410l-4 16M1556 430v6M1537 830h0M1488 1026h0M1540 1020h0M1400 1075v10M1395 1106h0M1202 1045h0M1240 1040l2 16M1008 975h0M755 18h6M600 10l20 10M655 70l20 0-10 20 14 12M860 985l8-20 14 8M1260 1140l14-60M1412 26h0M1304 20v8M180 960h0M235 250l35-60M270 190l30 106M400 240h34M424 234l-10 36M165 1085h0M370 1050l30 20"/>
<path class="d" d="M148 76v20M128 185l8 24 10-12M500 8h0M465 460h24M545 516h0M582 500l-8 34M345 610l20 8M528 674h4M408 802v30M850 5v0M838 5h30M1192 492v16M1298 730v36M1080 822l16 20M1045 945l-10 20 25 30M1112 960v40M1140 955v10M1170 985l30-8 22 22M1310 1100h0M1200 1070v44M52 622h20M5 115h0M348 245l24 20M1060 94v30h-8M1095 165l38 30v20M1060 445l24 10 12 40M820 220l15 30-12 40M800 234h16M880 1020l-5 40M900 1040l20 5 35-22M1130 1030l20-20M994 1080v50M1240 1130h20M1558 1080h10M812 5v16"/>
<path class="f" d="M168 24l20-6 12-18h14l14 38-10 14-20-14h-30zM74 66l28 0-4 30-6 26-14-20zM526 26l40 6-4 24-14 14-24-20zM736 76l14-18q26 10 24 48h-16l-28-24zM336 114l14-6 14 30 18 16-20 4-16 26-16-4zM502 166l14-20 12 26v16q-24-4-26-22M198 164l20 10 14-20 18-4-6 36-14 24-20-6-12-16zM48 262l20-14 8 40 20 20-18 20-20-4-34 32-10-14-14-20v-14l50-20zM140 300q20-26 38 0l4 36-30-10zM174 366l20-8 12 44h-20q-20-20-12-36M190 458l20-20 16 16 16 4-20 14-20 4zM980 430l20-8 14 14 6-24 20-8-2 50v44l-14 14-40-40zM262 926q24-12 34 26-4 16-20 14-20-10-14-40M224 1000l14 20 20-12 34-10 0 20q30 20 28 122h-30l-20-34-12 0-4 34h-34q-30-20-40-84l34 16 14-20zM396 1000q30 0 28 30l-14 36 10 20-14 28-20-10v-40l12-30zM0 782q24-2 22 40 36 20 30 50-20 20-52-36zM854 798l34 10 20-8 2-26 28 10v30l-22 6-24 4 24 30-4 12-28-14-20-16zM1510 460l24-6 10 10 24-10v100l-40-10-16-14 14-20-4-30zM1482 612l30 0 16-18 16 20 16 18-20 16-26 0-10 16-22-20zM850 1080l30-24 20 0 0 34 10 20-6 30h-16l-10-26-28-8zM1074 984l34-4 14 30 16 34-14 14-4 30 14 6-20 24-24-6-10-16 0-50-14-28-10-20zM1400 1034l26-14 34 40v60l-20 4-14-50zM0 1056l24 0-4 20-20 14zM974 1140l14-60 14 30 4 30zM1224 1124h40l10 16h-50z"/>
</g>
<rect class="grid" x="0" y="240" width="1080" height="1680"/>
<rect class="tile" x="266" y="1094" width="49" height="46"/>
<rect class="tile" x="668" y="1436" width="48" height="45"/>
<rect class="tile" x="1073" y="752" width="48" height="45"/>
<rect class="tile" x="1073" y="1779" width="48" height="46"/>
<g class="tile-mark"><use href="#mark" x="191" y="1037"/><use href="#mark" x="592" y="1379"/></g>
<g class="stamp">
<text transform="translate(592 1228) rotate(-39)">shutterst.ck</text>
<text transform="translate(-19 1057) rotate(-39)">shutterst.ck</text>
<text transform="translate(990 544) rotate(-39)">shutterst.ck</text>
<text transform="translate(990 1570) rotate(-39)">shutterst.ck</text>
<text transform="translate(-19 2083) rotate(-39)">shutterst.ck</text>
</g>
</svg>
<form class="portal">
  <h2>Login Portal</h2>
  <div class="field"><span class="caret"></span><input type="email" placeholder="Enter Your Email" aria-label="Enter Your Email"></div>
  <div class="field"><input type="password" placeholder="Enter Password" aria-label="Enter Password"></div>
  <button type="button">LOGIN</button>
</form>
</main>
</body>
</html>
```
FILE: styles.css
```css
* { box-sizing: border-box; margin: 0; }
body {
  display: flex;
  flex-direction: column;
  min-height: 100vh;
  background: #fdfdfd;
  font-family: Roboto, "Liberation Sans", sans-serif;
}
.status {
  display: flex;
  align-items: center;
  justify-content: space-between;
  height: 72px;
  padding: 2px 24px 0 21px;
  background: #444549;
  color: #cfcfcf;
  font-family: "Roboto Condensed", "Liberation Sans Narrow", Roboto, sans-serif;
  font-size: 44px;
  line-height: 70px;
  white-space: nowrap;
}
.status-group { display: flex; align-items: center; gap: 6px; }
.notices { gap: 16px; }
.status svg { fill: #cfcfcf; flex: none; }
.status svg text { font-family: Roboto, sans-serif; font-weight: 700; }
.status .line3 { fill: none; stroke: #cfcfcf; stroke-width: 3; }
.status .line4 { fill: none; stroke: #cfcfcf; stroke-width: 4; }
.status .shield { fill: none; stroke: #444549; stroke-width: 2; }
.status .sim text { fill: #444549; font-size: 26px; text-anchor: middle; }
.status .bars { margin-left: 14px; }
.status .bars text { font-size: 18px; }
.status .dim, .status .empty { fill: #7e7e80; }
.battery-text { margin: 0 3px 0 7px; }
.clock { margin-left: 8px; }
.appbar {
  position: relative;
  z-index: 1;
  display: flex;
  align-items: center;
  height: 168px;
  padding: 4px 48px 0;
  background: #000;
  color: #fff;
  box-shadow: 0 6px 24px rgba(0, 0, 0, .35);
}
.appbar h1 { font-size: 60px; font-weight: 500; line-height: 72px; }
.screen { position: relative; flex: 1; overflow: hidden; }
.splatter { position: absolute; inset: 0; width: 100%; height: 100%; }
.splatter .a, .splatter .b, .splatter .c, .splatter .d {
  fill: none;
  stroke: #040404;
  stroke-linecap: round;
  stroke-linejoin: round;
}
.splatter .a { stroke-width: 7; }
.splatter .b { stroke-width: 12; }
.splatter .c { stroke-width: 18; }
.splatter .d { stroke-width: 27; }
.splatter .f { fill: #040404; stroke: #040404; stroke-width: 6; stroke-linejoin: round; filter: url(#ink); }
.splatter pattern { fill: none; stroke: #000; stroke-opacity: .06; stroke-width: 2; }
.splatter .grid { fill: url(#grid); }
.splatter .tile { fill: #bcbcbc; fill-opacity: .55; }
.splatter .tile-mark { fill: #eee; fill-opacity: .8; }
.stamp {
  fill: #fff;
  fill-opacity: .4;
  stroke: #e6e6e6;
  stroke-width: 2;
  font-size: 62px;
  font-weight: 500;
}
.portal {
  position: relative;
  display: flex;
  flex-direction: column;
  align-items: center;
  gap: 60px;
  padding: 78px;
}
.portal h2 {
  padding: 40px 30px 32px;
  background: #040404;
  color: #fff;
  font-size: 66px;
  line-height: 76px;
}
.field { position: relative; width: 100%; background: #fff116; }
.field input {
  position: relative;
  display: block;
  width: 100%;
  height: 133px;
  padding: 4px 30px 0;
  border: 0;
  outline: 0;
  background: transparent;
  color: #000;
  font: 700 54px Roboto, sans-serif;
}
.field input::placeholder { color: rgba(0, 0, 0, .54); opacity: 1; }
.caret { position: absolute; left: 30px; top: 30px; width: 6px; height: 73px; background: #ff4081; }
.portal button {
  width: 411px;
  height: 144px;
  padding: 2px 0 0;
  border: 0;
  background: #040404;
  color: #fff;
  font: 500 60px Roboto, sans-serif;
  box-shadow: 0 4px 10px rgba(0, 0, 0, .35);
}
```
